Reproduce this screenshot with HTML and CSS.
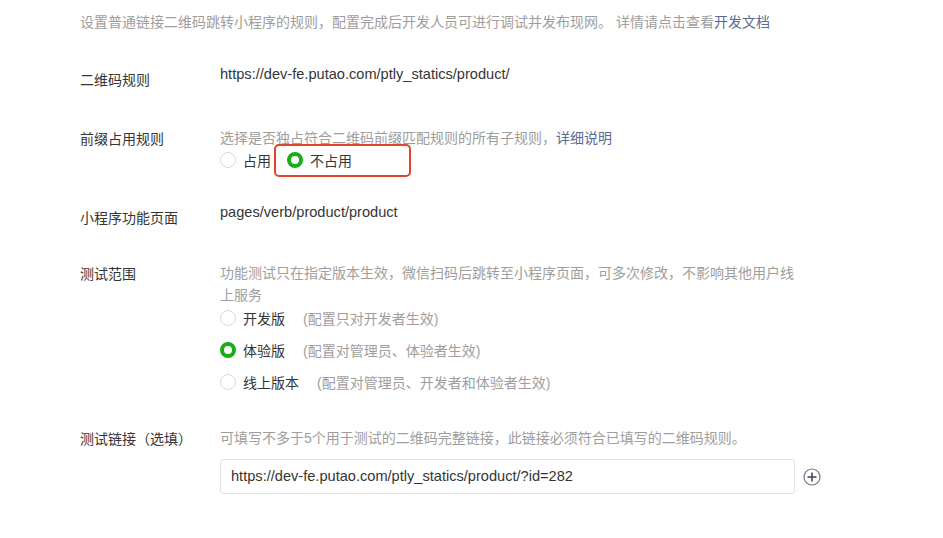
FILE: index.html
```html
<!DOCTYPE html>
<html lang="zh-CN">
<head>
<meta charset="utf-8">
<title>二维码规则</title>
<link rel="stylesheet" href="styles.css">
</head>
<body>
<div class="page">
  <p class="intro">设置普通链接二维码跳转小程序的规则，配置完成后开发人员可进行调试并发布现网。 详情请点击查看<a class="link" href="#">开发文档</a></p>

  <div class="row row-1">
    <div class="label label-low">二维码规则</div>
    <div class="content"><div class="value">https://dev-fe.putao.com/ptly_statics/product/</div></div>
  </div>

  <div class="row row-2">
    <div class="label">前缀占用规则</div>
    <div class="content">
      <div class="hint">选择是否独占符合二维码前缀匹配规则的所有子规则，<a class="link" href="#">详细说明</a></div>
      <div class="radio-inline">
        <label class="radio"><span class="dot"></span><span class="radio-text">占用</span></label>
        <label class="radio highlight"><span class="dot checked"></span><span class="radio-text">不占用</span></label>
      </div>
    </div>
  </div>

  <div class="row row-3">
    <div class="label label-low">小程序功能页面</div>
    <div class="content"><div class="value">pages/verb/product/product</div></div>
  </div>

  <div class="row row-4">
    <div class="label">测试范围</div>
    <div class="content">
      <div class="hint hint-wrap">功能测试只在指定版本生效，微信扫码后跳转至小程序页面，可多次修改，不影响其他用户线上服务</div>
      <div class="radio-list">
        <label class="radio"><span class="dot"></span><span class="radio-text">开发版</span><span class="radio-note">(配置只对开发者生效)</span></label>
        <label class="radio"><span class="dot checked"></span><span class="radio-text">体验版</span><span class="radio-note">(配置对管理员、体验者生效)</span></label>
        <label class="radio"><span class="dot"></span><span class="radio-text">线上版本</span><span class="radio-note">(配置对管理员、开发者和体验者生效)</span></label>
      </div>
    </div>
  </div>

  <div class="row row-5">
    <div class="label">测试链接（选填）</div>
    <div class="content">
      <div class="hint">可填写不多于5个用于测试的二维码完整链接，此链接必须符合已填写的二维码规则。</div>
      <div class="input-line">
        <div class="input">https://dev-fe.putao.com/ptly_statics/product/?id=282</div>
        <svg class="add" width="18" height="18" viewBox="0 0 18 18" aria-hidden="true">
          <circle cx="9" cy="9" r="8" fill="none" stroke="#6f7380" stroke-width="1.2"/>
          <path d="M9 5v8M5 9h8" stroke="#3c4150" stroke-width="1.5" stroke-linecap="round"/>
        </svg>
      </div>
    </div>
  </div>
</div>
</body>
</html>
```

FILE: styles.css
```css
* { box-sizing: border-box; }
html, body { margin: 0; padding: 0; background: #fff; }
body {
  font-family: "Liberation Sans", "Noto Sans CJK SC", sans-serif;
  font-size: 14px;
  color: #353535;
}
.page { padding: 12px 0 0 80px; }
.intro { margin: 0; line-height: 20px; color: #9e9e9e; }
.link { color: #576b95; text-decoration: none; }

.row { display: grid; grid-template-columns: 140px 580px; }
.row-1 { margin-top: 32px; }
.row-2 { margin-top: 38px; }
.row-3 { margin-top: 30px; }
.row-4 { margin-top: 34px; }
.row-5 { margin-top: 34px; }

.label { line-height: 20px; padding-top: 1px; color: #353535; }
.label-low { padding-top: 6px; }
.row-4 .label { padding-top: 2px; }
.value { line-height: 20px; color: #353535; font-size: 14.6px; }
.hint { line-height: 20px; color: #9e9e9e; }
.hint-wrap { line-height: 22px; }

.radio-inline { display: flex; gap: 16px; height: 24px; align-items: center; }
.radio-list { display: flex; flex-direction: column; gap: 8px; }
.radio-list .radio { height: 24px; }
.radio { display: inline-flex; align-items: center; gap: 7px; position: relative; }
.dot {
  width: 16px; height: 16px; border-radius: 50%;
  border: 1px solid #dcdcdc; background: #fff; flex: none;
}
.dot.checked { border: 4px solid #1aad19; }
.radio-text { color: #353535; }
.radio-note { color: #9e9e9e; margin-left: 11px; }

.highlight::after {
  content: "";
  position: absolute;
  left: -13px; right: -59px; top: -6px; bottom: -7px;
  border: 2px solid #e2462a;
  border-radius: 5px;
}

.input-line { display: flex; align-items: center; gap: 8px; margin-top: 11px; }
.input {
  width: 575px; height: 35px; flex: none;
  border: 1px solid #e3e3e3; border-radius: 3px;
  padding: 0 10px; line-height: 33px; color: #353535; font-size: 14.6px;
}
.add { flex: none; }
```
